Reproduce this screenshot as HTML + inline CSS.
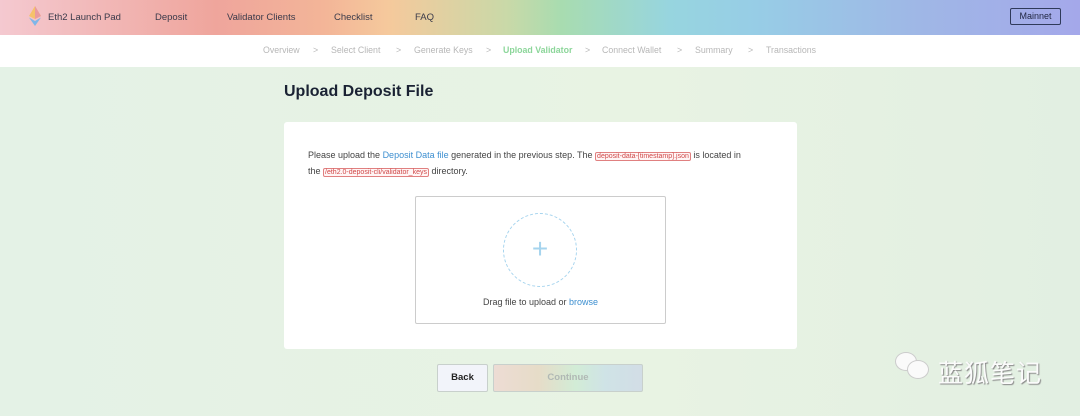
<!DOCTYPE html>
<html><head><meta charset="utf-8"><style>
*{margin:0;padding:0;box-sizing:border-box}
body{width:1080px;height:416px;overflow:hidden;font-family:"Liberation Sans",sans-serif;background:linear-gradient(90deg,#e4f2e6,#e8f3e3 60%,#e2efe2);position:relative}
.hdr{position:absolute;left:0;top:0;width:1080px;height:35px;background:linear-gradient(90deg,#f4c9d0 0%,#efa59c 20%,#f3b598 30%,#f5c99c 36%,#c9d9a8 47%,#a8dcb0 52%,#97d5df 62%,#97cde6 70%,#9fb7e6 85%,#a4a8ea 100%)}
.hdr span{position:absolute;top:12px;font-size:9.5px;color:#3a3a4a}
.mn{position:absolute;left:1010px;top:8px;width:51px;height:17px;border:1px solid #2f3a5a;border-radius:2px;font-size:9px;color:#1f2540;text-align:center;line-height:15px}
.sub{position:absolute;left:0;top:35px;width:1080px;height:32px;background:#fff}
.sub span{position:absolute;top:10px;font-size:8.8px;color:#b7b7b7}
h1{position:absolute;left:284px;top:83px;font-size:16px;color:#1a2233;font-weight:bold}
.card{position:absolute;left:284px;top:122px;width:513px;height:227px;background:#fff;border-radius:3px}
.p{position:absolute;left:24px;top:26px;font-size:9px;line-height:14px;color:#444;width:470px;white-space:nowrap}
.p a{color:#3d8fd0}
.c{border:1px solid #e08080;color:#d04848;font-size:7px;padding:0 1px;border-radius:2px;background:#fff5f5}
.dz{position:absolute;left:131px;top:74px;width:251px;height:128px;border:1px solid #ccc;border-radius:2px}
.circ{position:absolute;left:87px;top:16px;width:74px;height:74px;border:1.5px dashed #a6d4ee;border-radius:50%;text-align:center;line-height:70px;font-size:28px;color:#a6d4ee;font-weight:100}
.dt{position:absolute;left:0;width:100%;top:100px;text-align:center;font-size:9px;color:#444}
.dt a{color:#3d8fd0}
.btn{position:absolute;top:364px;height:28px;border:1px solid #c8d0cc;border-radius:2px;font-size:9.5px;font-weight:bold;text-align:center;line-height:26px}
</style></head><body>
<div class="hdr">
<svg style="position:absolute;left:29px;top:6px" width="12" height="20" viewBox="0 0 12 20"><path d="M6 0L0 10L6 13L12 10Z" fill="#f5c26b"/><path d="M6 0L6 13L12 10Z" fill="#e89ba0"/><path d="M0 11.5L6 20L12 11.5L6 15Z" fill="#7fb6e8"/></svg>
<span style="left:48px">Eth2 Launch Pad</span>
<span style="left:155px">Deposit</span>
<span style="left:227px">Validator Clients</span>
<span style="left:334px">Checklist</span>
<span style="left:415px">FAQ</span>
<div class="mn">Mainnet</div>
</div>
<div class="sub">
<span style="left:263px">Overview</span><span style="left:313px">&gt;</span>
<span style="left:331px">Select Client</span><span style="left:396px">&gt;</span>
<span style="left:414px">Generate Keys</span><span style="left:486px">&gt;</span>
<span style="left:503px;color:#8cd69a;font-weight:bold">Upload Validator</span><span style="left:585px">&gt;</span>
<span style="left:602px">Connect Wallet</span><span style="left:677px">&gt;</span>
<span style="left:695px">Summary</span><span style="left:748px">&gt;</span>
<span style="left:766px">Transactions</span>
</div>
<h1>Upload Deposit File</h1>
<div class="card">
<div class="p">Please upload the <a>Deposit Data file</a> generated in the previous step. The <span class="c">deposit-data-[timestamp].json</span> is located in<br>the <span class="c">/eth2.0-deposit-cli/validator_keys</span> directory.</div>
<div class="dz"><div class="circ">+</div><div class="dt">Drag file to upload or <a>browse</a></div></div>
</div>
<div class="btn" style="left:437px;width:51px;background:#f2f4fa;color:#222">Back</div>
<div class="btn" style="left:493px;width:150px;background:linear-gradient(90deg,#eddcd4,#e6dcc8 30%,#d2ecd6 55%,#cfe3e6 75%,#d2dde6);color:#b0b8b4">Continue</div>
<div style="position:absolute;left:895px;top:352px;width:40px;height:28px">
<div style="position:absolute;left:0;top:0;width:22px;height:19px;border-radius:50%;background:#fafafa;border:1px solid #ccc"></div>
<div style="position:absolute;left:12px;top:8px;width:22px;height:19px;border-radius:50%;background:#fafafa;border:1px solid #ccc"></div>
</div>
<div style="position:absolute;left:938px;top:354px;font-family:'Noto Sans CJK SC',sans-serif;font-size:25px;color:#fbfbfb;text-shadow:1px 1px 1px #888;letter-spacing:1px">蓝狐笔记</div>
</body></html>
